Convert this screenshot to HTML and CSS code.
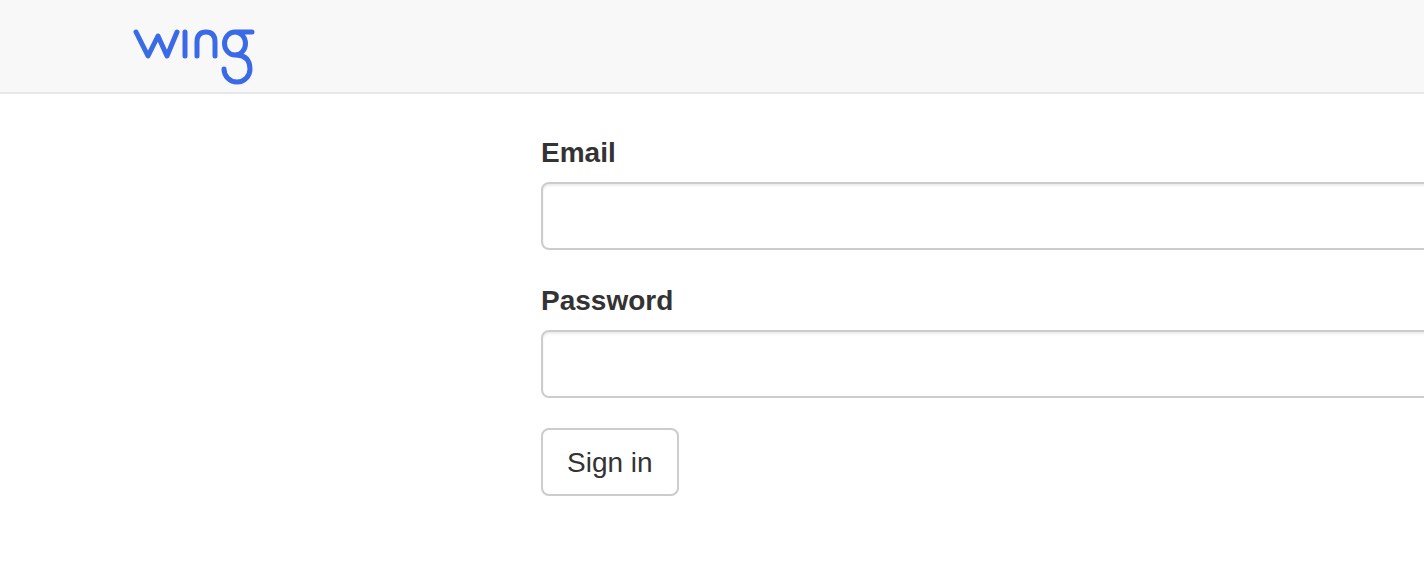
FILE: index.html
```html
<!DOCTYPE html>
<html lang="en">
<head>
  <meta charset="UTF-8" />
  <title>Sign in</title>
  <link rel="stylesheet" href="styles.css">
</head>
<body>

  <header class="navbar">
    <a class="brand" href="#" aria-label="wing">
      <svg class="brand-logo" width="124" height="64" viewBox="0 0 124 64" fill="none" stroke="#3b6ae6" stroke-width="5" stroke-linecap="round" stroke-linejoin="round">
        <path d="M4 7 L16 31 L26 11 L35 31 L45 7" />
        <path d="M53 7 V31" />
        <path d="M65 31 V17 Q65 7 74 7 Q83 7 83 17 V31" />
        <path d="M120 7 H103 A10.5 11.5 0 1 0 103 30 A10.5 11.5 0 1 0 103 7" />
        <path d="M105 30 Q118 31 118 44 A13 13 0 0 1 92 44" />
      </svg>
    </a>
  </header>

  <main class="content">
    <form class="login-form">
      <div class="form-group">
        <label for="email">Email</label>
        <input id="email" type="email">
      </div>
      <div class="form-group">
        <label for="password">Password</label>
        <input id="password" type="password">
      </div>
      <button type="submit" class="btn">Sign in</button>
    </form>
  </main>

</body>
</html>
```

FILE: styles.css
```css
* {
  box-sizing: border-box;
}

html, body {
  margin: 0;
  overflow: hidden;
}

body {
  font-family: "Liberation Sans", Arial, sans-serif;
  font-size: 28px;
  line-height: 40px;
  color: #333;
  background: #fff;
  min-height: 100vh;
}

.navbar {
  height: 94px;
  padding: 25px 0 0 132px;
  background: #f8f8f8;
  border-bottom: 2px solid #e7e7e7;
}

.brand {
  display: block;
  width: 124px;
}

.brand-logo {
  display: block;
}

.content {
  padding: 38px 0 0 541px;
}

.login-form {
  width: 1400px;
}

.form-group {
  margin-bottom: 30px;
}

label {
  display: block;
  padding-top: 1px;
  margin-bottom: 9px;
  font-weight: bold;
}

input {
  display: block;
  width: 100%;
  height: 68px;
  padding: 12px 24px;
  font: inherit;
  color: #555;
  background: #fff;
  border: 2px solid #ccc;
  border-radius: 8px;
  box-shadow: inset 0 2px 2px rgba(0, 0, 0, 0.075);
}

.btn {
  display: block;
  height: 68px;
  padding: 13px 24px 12px;
  font: inherit;
  color: #333;
  background: #fff;
  border: 2px solid #ccc;
  border-radius: 8px;
}
```
